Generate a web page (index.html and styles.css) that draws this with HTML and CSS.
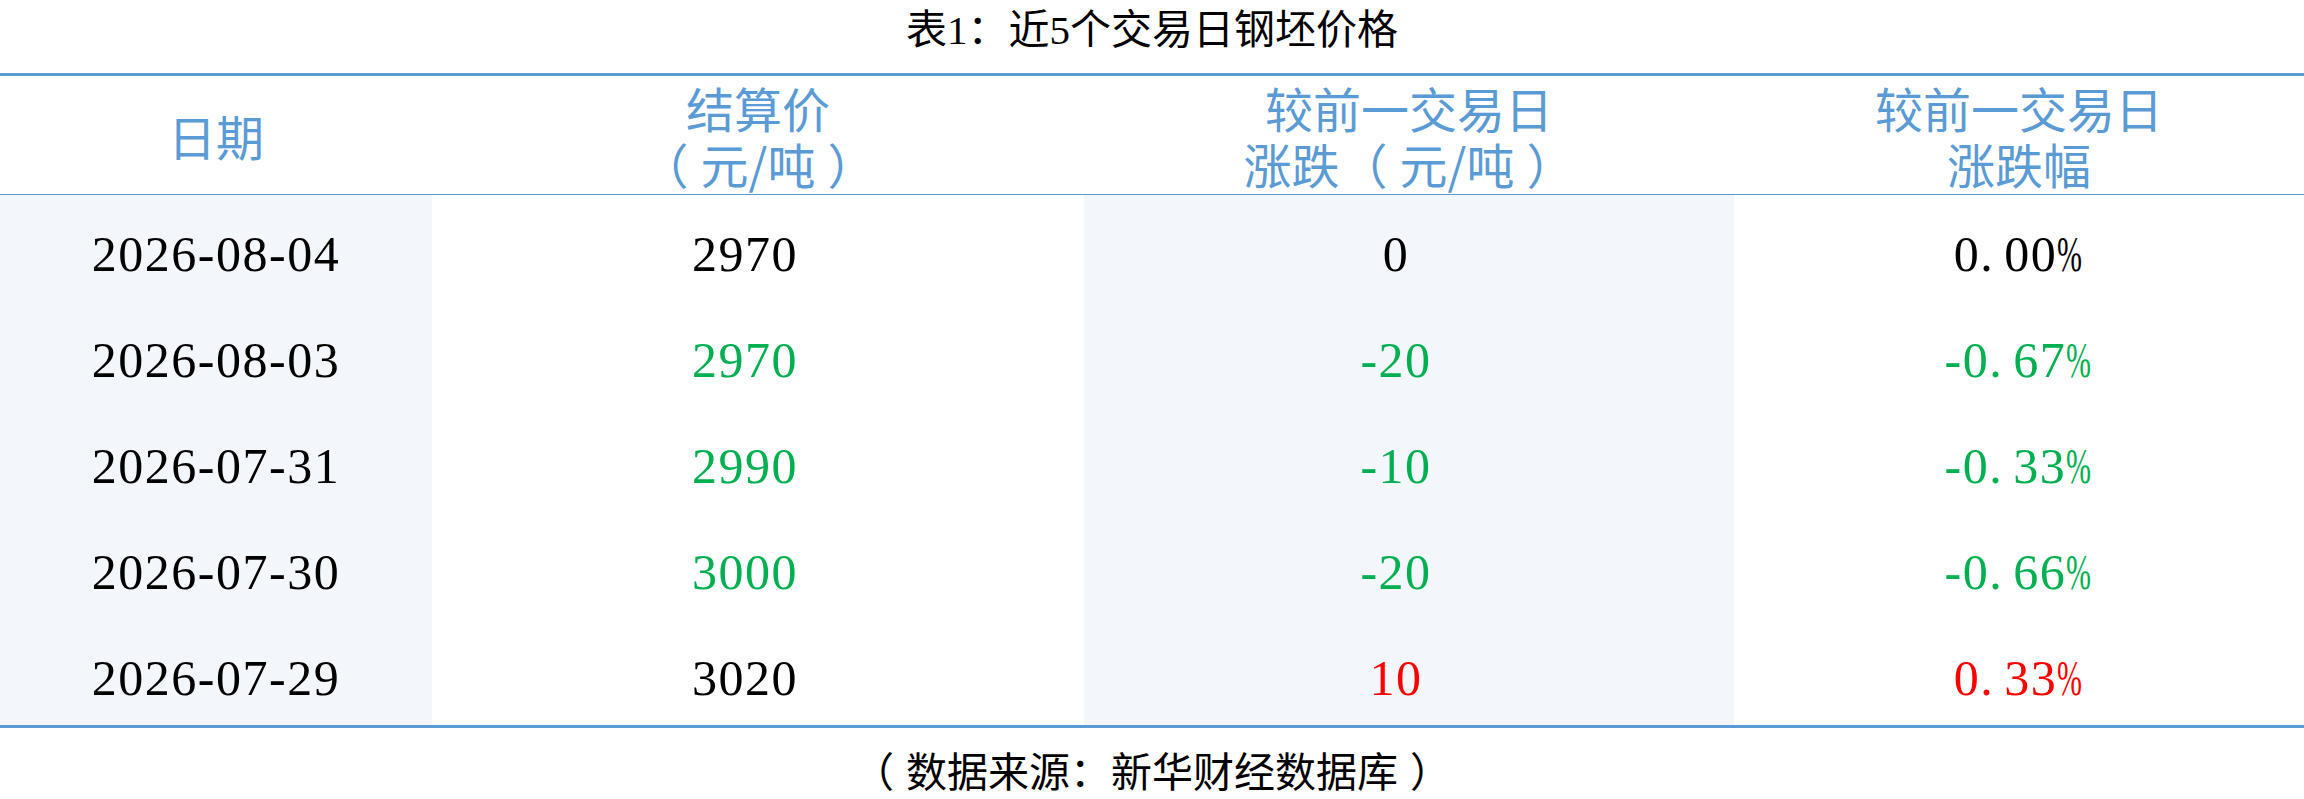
FILE: index.html
```html
<!DOCTYPE html>
<html lang="zh-CN">
<head>
<meta charset="utf-8">
<title>表1：近5个交易日钢坯价格</title>
<link rel="stylesheet" href="styles.css">
</head>
<body>
<div class="page">
  <div class="caption">表1：近5个交易日钢坯价格</div>
  <div class="table">
    <div class="th"><span class="line">日期</span></div>
    <div class="th"><span class="line">结算价</span><span class="line"><span class="lp">（</span>元/吨<span class="rp">）</span></span></div>
    <div class="th"><span class="line">较前一交易日</span><span class="line">涨跌<span class="lp">（</span>元/吨<span class="rp">）</span></span></div>
    <div class="th"><span class="line">较前一交易日</span><span class="line">涨跌幅</span></div>

    <div class="td shade">2026-08-04</div>
    <div class="td num">2970</div>
    <div class="td shade num">0</div>
    <div class="td">0<span class="dot">.</span>00<span class="pct">%</span></div>

    <div class="td shade">2026-08-03</div>
    <div class="td num down">2970</div>
    <div class="td shade num down">-20</div>
    <div class="td down">-0<span class="dot">.</span>67<span class="pct">%</span></div>

    <div class="td shade">2026-07-31</div>
    <div class="td num down">2990</div>
    <div class="td shade num down">-10</div>
    <div class="td down">-0<span class="dot">.</span>33<span class="pct">%</span></div>

    <div class="td shade">2026-07-30</div>
    <div class="td num down">3000</div>
    <div class="td shade num down">-20</div>
    <div class="td down">-0<span class="dot">.</span>66<span class="pct">%</span></div>

    <div class="td shade">2026-07-29</div>
    <div class="td num">3020</div>
    <div class="td shade num up">10</div>
    <div class="td up">0<span class="dot">.</span>33<span class="pct">%</span></div>
  </div>
  <div class="source"><span class="lp">（</span>数据来源：新华财经数据库<span class="rp">）</span></div>
</div>
</body>
</html>
```
FILE: styles.css
```css
html, body {
  margin: 0;
  padding: 0;
  background: #ffffff;
}

.page {
  width: 2304px;
  font-family: "Liberation Serif", "Noto Sans CJK SC", serif;
  color: #000000;
}

.caption {
  box-sizing: border-box;
  height: 73px;
  padding-top: 5px;
  font-size: 41px;
  line-height: 50px;
  text-align: center;
}

.table {
  display: grid;
  grid-template-columns: 432px 652px 650px 570px;
  grid-template-rows: 119px repeat(5, 106px);
  border-top: 3px solid #5b9bd5;
  border-bottom: 3px solid #5b9bd5;
}

.th {
  display: flex;
  flex-direction: column;
  align-items: center;
  justify-content: center;
  border-bottom: 1px solid #5b9bd5;
  font-family: "Noto Sans CJK SC", sans-serif;
  font-size: 48px;
  color: #5b9bd5;
  white-space: nowrap;
}

.th .line {
  display: block;
  height: 56px;
  line-height: 56px;
}

.lp {
  margin-right: 12px;
}

.rp {
  margin-left: 12px;
}

.td {
  box-sizing: border-box;
  padding-top: 12px;
  font-size: 50px;
  line-height: 94px;
  letter-spacing: 1.5px;
  text-align: center;
  white-space: nowrap;
}

.td.num {
  padding-right: 26px;
}

.shade {
  background: #f3f6fb;
}

.down {
  color: #00b050;
}

.up {
  color: #ff0000;
}

.dot {
  margin-right: 10px;
}

.pct {
  display: inline-block;
  transform: scaleX(0.6);
  transform-origin: left center;
  margin-right: -16px;
}

.source {
  padding-top: 21px;
  font-size: 41px;
  line-height: 48px;
  text-align: center;
}
```
